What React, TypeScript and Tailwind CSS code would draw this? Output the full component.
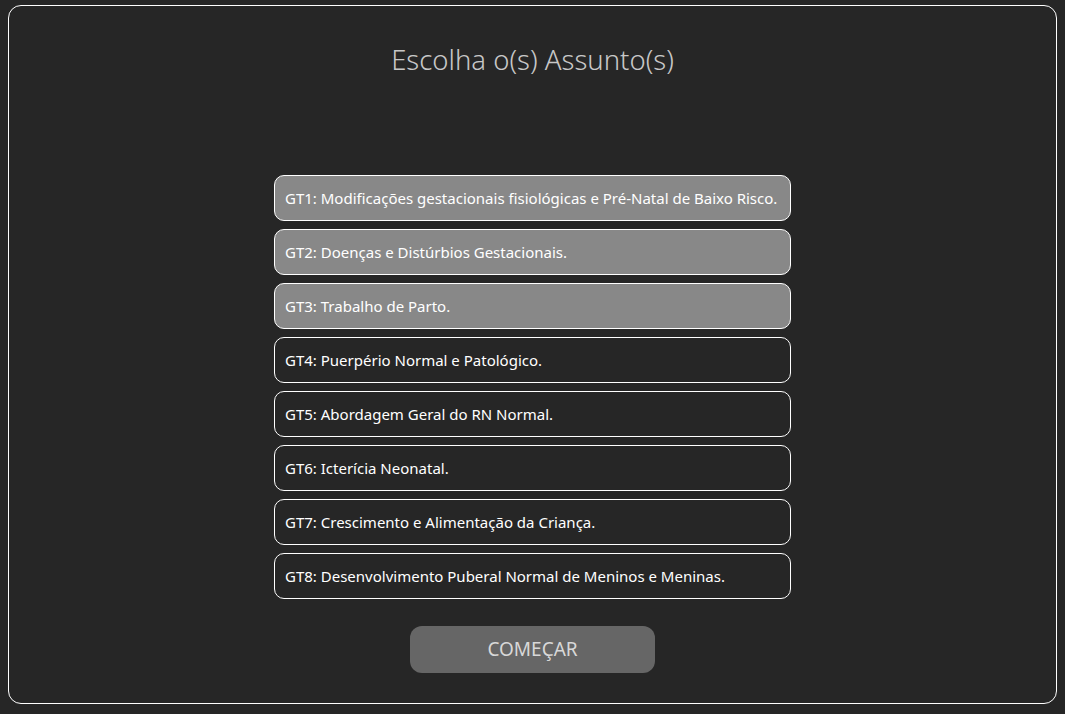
import React from "react";

const items = [
  { t: "GT1: Modificações gestacionais fisiológicas e Pré-Natal de Baixo Risco.", s: true },
  { t: "GT2: Doenças e Distúrbios Gestacionais.", s: true },
  { t: "GT3: Trabalho de Parto.", s: true },
  { t: "GT4: Puerpério Normal e Patológico.", s: false },
  { t: "GT5: Abordagem Geral do RN Normal.", s: false },
  { t: "GT6: Icterícia Neonatal.", s: false },
  { t: "GT7: Crescimento e Alimentação da Criança.", s: false },
  { t: "GT8: Desenvolvimento Puberal Normal de Meninos e Meninas.", s: false },
];

export default function App() {
  return (
    <div
      className="w-[1065px] h-[714px] bg-[#262626] pt-[5px] px-[8px] overflow-hidden"
      style={{ fontFamily: '"Noto Sans", "Open Sans", sans-serif' }}
    >
      <div className="h-[699px] border border-white rounded-[13px] flex flex-col items-center">
        <h1 className="mt-[36px] h-[36px] text-[27.5px] leading-[36px] text-[#c8c8c8] font-light">
          Escolha o(s) Assunto(s)
        </h1>
        <div className="mt-[97px] flex flex-col gap-[8px]">
          {items.map((it) => (
            <div
              key={it.t}
              className={`w-[517px] h-[46px] border border-white rounded-[10px] flex items-center pl-[10px] text-[15px] text-white ${
                it.s ? "bg-[#888888]" : "bg-[#262626]"
              }`}
            >
              {it.t}
            </div>
          ))}
        </div>
        <button className="mt-[27px] w-[245px] h-[47px] bg-[#666666] rounded-[12px] text-[19px] text-[#d8d8d8]">
          COMEÇAR
        </button>
      </div>
    </div>
  );
}
